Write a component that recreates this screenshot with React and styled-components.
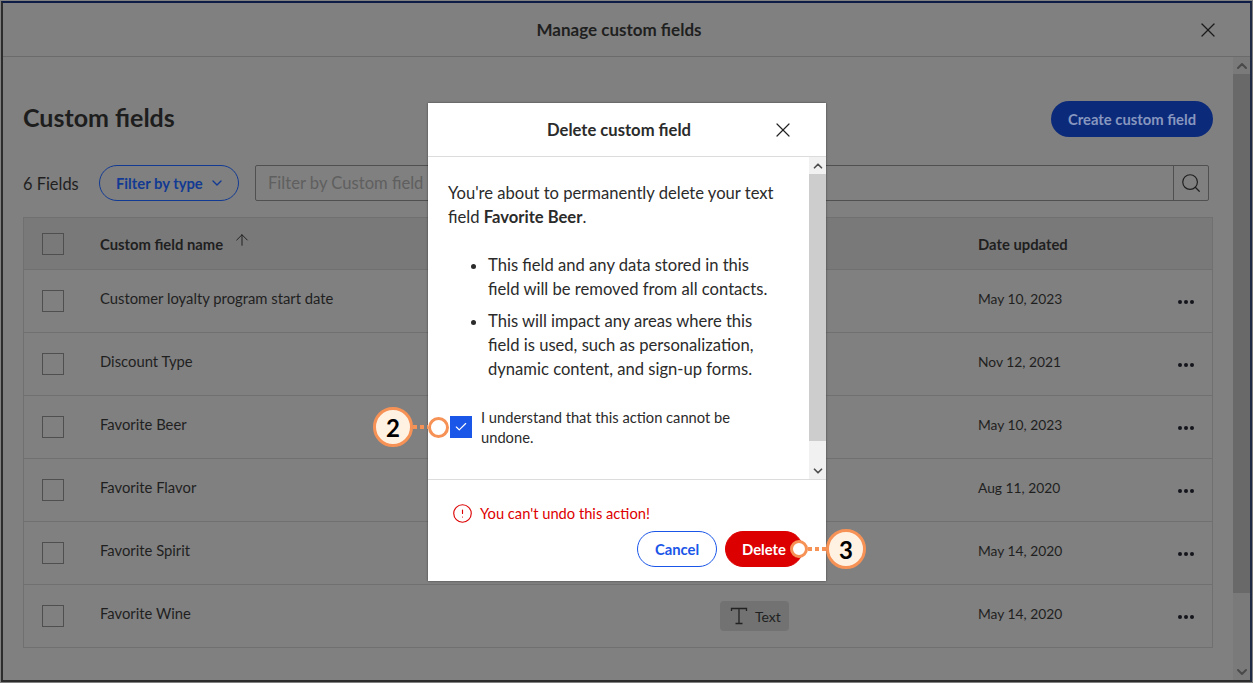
import React from 'react';
import styled, { createGlobalStyle } from 'styled-components';
import { ChevronDown, ChevronUp, Search, X, ArrowUp, Check, CircleAlert } from 'lucide-react';

const GlobalStyle = createGlobalStyle`
	html, body {
		margin: 0;
		padding: 0;
		height: 100%;
		background: #808080;
		overflow: hidden;
	}
	* {
		box-sizing: border-box;
		font-family: Lato, 'Liberation Sans', sans-serif;
	}
`;

const Frame = styled.div`
	position: relative;
	display: flex;
	flex-direction: column;
	width: 1253px;
	height: 683px;
	padding: 1px;
	background: #808080;
	overflow: hidden;
`;

const Window = styled.div`
	flex: 1;
	display: flex;
	flex-direction: column;
	min-height: 0;
	border: 2px solid #2c2c2c;
	border-top-color: #0c1c46;
	border-right-color: #1f2a44;
`;

const TopBar = styled.header`
	position: relative;
	display: flex;
	align-items: center;
	justify-content: center;
	height: 54px;
	flex: none;
	padding-right: 15px;
	border-bottom: 1px solid #6b6b6b;
	font-size: 17px;
	font-weight: 700;
	color: #1f1f1f;
`;

const CloseTop = styled.span`
	position: absolute;
	right: 30px;
	top: 15px;
	display: flex;
	color: #1a1a1a;
`;

const Content = styled.div`
	flex: 1;
	display: flex;
	min-height: 0;
`;

const Main = styled.main`
	flex: 1;
	padding: 44px 20px 0 20px;
`;

const Scrollbar = styled.div`
	flex: none;
	display: flex;
	flex-direction: column;
	justify-content: space-between;
	width: ${p => p.$width}px;
	background: ${p => p.$track};
`;

const ScrollButton = styled.span`
	flex: none;
	display: flex;
	align-items: center;
	justify-content: center;
	height: 17px;
	color: ${p => p.$color};
`;

const Thumb = styled.div`
	flex: none;
	height: ${p => p.$height}px;
	background: ${p => p.$color};
`;

const ScrollSpacer = styled.div`
	flex: 1;
`;

const PageHead = styled.div`
	display: flex;
	align-items: center;
	justify-content: space-between;
	height: 36px;
`;

const PageTitle = styled.h1`
	margin: 0 0 4px;
	font-size: 25px;
	font-weight: 700;
	color: #1d1d1d;
`;

const CreateButton = styled.span`
	display: flex;
	align-items: center;
	justify-content: center;
	width: 162px;
	height: 36px;
	padding-bottom: 1px;
	border-radius: 18px;
	background: #0c2a7a;
	color: #8797bf;
	font-size: 14.8px;
	font-weight: 700;
`;

const Toolbar = styled.div`
	display: flex;
	align-items: center;
	height: 36px;
	margin: 28px 4px 16px 0;
`;

const FieldCount = styled.span`
	width: 76px;
	font-size: 16.4px;
	color: #1f1f1f;
`;

const FilterButton = styled.span`
	display: flex;
	align-items: center;
	justify-content: space-between;
	width: 140px;
	height: 36px;
	padding: 0 13px 0 16px;
	border: 1px solid #123a93;
	border-radius: 18px;
	color: #123a93;
	font-size: 14.8px;
	font-weight: 700;
`;

const SearchBox = styled.div`
	flex: 1;
	display: flex;
	height: 36px;
	margin-left: 16px;
	border: 1px solid #505050;
	border-radius: 2px;
`;

const SearchText = styled.span`
	flex: 1;
	display: flex;
	align-items: center;
	padding-left: 12px;
	font-size: 16.6px;
	color: #5f5f5f;
`;

const SearchIcon = styled.span`
	display: flex;
	align-items: center;
	justify-content: center;
	width: 35px;
	border-left: 1px solid #505050;
	color: #1f1f1f;
`;

const Table = styled.div`
	border: 1px solid #707070;
	border-bottom: 0;
`;

const Row = styled.div`
	display: grid;
	grid-template-columns: 76px 620px 258px 1fr;
	align-items: center;
	height: ${p => (p.$head ? 52 : 63)}px;
	border-bottom: 1px solid #707070;
	background: ${p => (p.$head ? '#797979' : 'transparent')};
	font-size: 14.8px;
	color: #1f1f1f;
`;

const HeadCell = styled.span`
	display: flex;
	align-items: center;
	gap: 10px;
	font-weight: 700;

	svg {
		margin-top: -8px;
	}
`;

const Cell = styled.span`
	display: flex;
	align-items: center;
	justify-content: ${p => (p.$split ? 'space-between' : 'flex-start')};
	padding-right: ${p => (p.$split ? 18 : 0)}px;
	padding-bottom: ${p => (p.$raised ? 7 : 0)}px;
`;

const DateText = styled.span`
	font-size: 13.8px;
	padding-bottom: 5px;
`;

const Box = styled.span`
	display: block;
	width: 22px;
	height: 22px;
	margin-left: 18px;
	border: 1px solid #4f4f4f;
`;

const TypePill = styled.span`
	display: flex;
	align-items: center;
	gap: 6px;
	width: 69px;
	height: 30px;
	padding-left: 9px;
	border-radius: 4px;
	background: #727272;
	font-size: 14px;
`;

const Dots = styled.span`
	display: flex;
	gap: 2px;
	margin-bottom: -1px;
`;

const Dot = styled.i`
	display: block;
	width: 4px;
	height: 4px;
	border-radius: 50%;
	background: #14141c;
`;

const Modal = styled.section`
	position: absolute;
	left: 428px;
	top: 103px;
	display: flex;
	flex-direction: column;
	width: 398px;
	height: 478px;
	background: #fff;
	box-shadow: 0 0 2px rgba(0, 0, 0, 0.5);
`;

const ModalHead = styled.div`
	position: relative;
	display: flex;
	align-items: center;
	justify-content: center;
	flex: none;
	height: 54px;
	padding-right: 16px;
	border-bottom: 1px solid #dcdcdc;
	font-size: 16.6px;
	font-weight: 700;
	color: #2b2b2b;
`;

const ModalClose = styled.span`
	position: absolute;
	right: 31px;
	top: 15px;
	display: flex;
	color: #222;
`;

const ModalMiddle = styled.div`
	flex: 1;
	display: flex;
	min-height: 0;
	border-bottom: 1px solid #dcdcdc;
`;

const ModalBody = styled.div`
	flex: 1;
	padding: 24px 20px 0;
	font-size: 16.6px;
	line-height: 24px;
	color: #2b2b2b;
`;

const Intro = styled.p`
	margin: 0;
`;

const Bullets = styled.ul`
	margin: 24px 0 0;
	padding: 0 8px 0 40px;
`;

const Bullet = styled.li`
	margin-bottom: 8px;
`;

const Confirm = styled.div`
	display: flex;
	gap: 9px;
	width: 330px;
	margin: 26px 0 0 2px;
	font-size: 14.7px;
	line-height: 20px;
`;

const Checked = styled.span`
	flex: none;
	display: flex;
	align-items: center;
	justify-content: center;
	width: 22px;
	height: 22px;
	margin-top: 9px;
	background: #1a56e8;
	color: #fff;
`;

const ModalFoot = styled.div`
	flex: none;
	height: 101px;
	padding: 24px 23px 0 24px;
`;

const Warning = styled.div`
	display: flex;
	align-items: center;
	gap: 7px;
	height: 18px;
	font-size: 14.7px;
	color: #dd0000;
`;

const Actions = styled.div`
	display: flex;
	justify-content: flex-end;
	gap: 8px;
	margin-top: 9px;
`;

const Action = styled.span`
	display: flex;
	align-items: center;
	justify-content: center;
	width: ${p => p.$width}px;
	height: 36px;
	border-radius: 18px;
	border: 1px solid ${p => (p.$danger ? '#dd0000' : '#1a56e8')};
	background: ${p => (p.$danger ? '#dd0000' : '#fff')};
	color: ${p => (p.$danger ? '#fff' : '#1a56e8')};
	font-size: 14.8px;
	font-weight: 700;
`;

const Callout = styled.div`
	position: absolute;
	left: ${p => p.$left}px;
	top: ${p => p.$top}px;
	display: flex;
	flex-direction: ${p => (p.$flip ? 'row-reverse' : 'row')};
	align-items: center;
`;

const Badge = styled.span`
	display: flex;
	align-items: center;
	justify-content: center;
	width: 40px;
	height: 40px;
	border: 3px solid #f79256;
	border-radius: 50%;
	background: #fff2e3;
	color: #000;
	font-size: 24px;
	font-weight: 700;
`;

const Leader = styled.span`
	display: block;
	width: ${p => p.$width}px;
	height: 4px;
	background: repeating-linear-gradient(${p => (p.$flip ? '270deg' : '90deg')}, #f79256 0 4px, transparent 4px 7px);
`;

const Ring = styled.span`
	display: block;
	width: ${p => p.$size}px;
	height: ${p => p.$size}px;
	border: 3px solid #f79256;
	border-radius: 50%;
	background: #fff;
`;

const TextGlyph = () => (
	<svg width="20" height="20" viewBox="0 0 20 20" fill="none" stroke="#222" strokeWidth="1.3">
		<path d="M2.5 5V2.5h15V5M10 2.5v15M6.5 17.5h7" />
	</svg>
);

const rows = [
	{ name: 'Customer loyalty program start date', date: 'May 10, 2023' },
	{ name: 'Discount Type', date: 'Nov 12, 2021' },
	{ name: 'Favorite Beer', date: 'May 10, 2023' },
	{ name: 'Favorite Flavor', date: 'Aug 11, 2020' },
	{ name: 'Favorite Spirit', date: 'May 14, 2020' },
	{ name: 'Favorite Wine', date: 'May 14, 2020' },
];

const App = () => {
	return (
		<Frame>
			<GlobalStyle />
			<Window>
				<TopBar>
					Manage custom fields
					<CloseTop><X size={24} strokeWidth={1.3} /></CloseTop>
				</TopBar>
				<Content>
					<Main>
						<PageHead>
							<PageTitle>Custom fields</PageTitle>
							<CreateButton>Create custom field</CreateButton>
						</PageHead>
						<Toolbar>
							<FieldCount>6 Fields</FieldCount>
							<FilterButton>
								Filter by type
								<ChevronDown size={16} />
							</FilterButton>
							<SearchBox>
								<SearchText>Filter by Custom field</SearchText>
								<SearchIcon><Search size={22} strokeWidth={1.3} /></SearchIcon>
							</SearchBox>
						</Toolbar>
						<Table>
							<Row $head>
								<Box />
								<HeadCell>Custom field name <ArrowUp size={18} strokeWidth={1.3} /></HeadCell>
								<span />
								<HeadCell>Date updated</HeadCell>
							</Row>
							{rows.map(row => (
								<Row key={row.name}>
									<Box />
									<Cell $raised>{row.name}</Cell>
									<Cell><TypePill><TextGlyph />Text</TypePill></Cell>
									<Cell $split>
										<DateText>{row.date}</DateText>
										<Dots><Dot /><Dot /><Dot /></Dots>
									</Cell>
								</Row>
							))}
						</Table>
					</Main>
					<Scrollbar $width={17} $track="#7a7a7a">
						<ScrollButton $color="#4a4a4a"><ChevronUp size={16} strokeWidth={3} /></ScrollButton>
						<Thumb $height={519} $color="#696969" />
						<ScrollSpacer />
						<ScrollButton $color="#4a4a4a"><ChevronDown size={16} strokeWidth={3} /></ScrollButton>
					</Scrollbar>
				</Content>
			</Window>

			<Modal>
				<ModalHead>
					Delete custom field
					<ModalClose><X size={24} strokeWidth={1.2} /></ModalClose>
				</ModalHead>
				<ModalMiddle>
					<ModalBody>
						<Intro>You're about to permanently delete your text field <b>Favorite Beer</b>.</Intro>
						<Bullets>
							<Bullet>This field and any data stored in this field will be removed from all contacts.</Bullet>
							<Bullet>This will impact any areas where this field is used, such as personalization, dynamic content, and sign-up forms.</Bullet>
						</Bullets>
						<Confirm>
							<Checked><Check size={14} strokeWidth={2} /></Checked>
							<span>I understand that this action cannot be undone.</span>
						</Confirm>
					</ModalBody>
					<Scrollbar $width={17} $track="#f1f1f1">
						<ScrollButton $color="#505050"><ChevronUp size={14} strokeWidth={3} /></ScrollButton>
						<Thumb $height={267} $color="#cdcdcd" />
						<ScrollSpacer />
						<ScrollButton $color="#505050"><ChevronDown size={14} strokeWidth={3} /></ScrollButton>
					</Scrollbar>
				</ModalMiddle>
				<ModalFoot>
					<Warning>
						<CircleAlert size={21} strokeWidth={1.3} />
						You can't undo this action!
					</Warning>
					<Actions>
						<Action $width={80}>Cancel</Action>
						<Action $width={78} $danger>Delete</Action>
					</Actions>
				</ModalFoot>
			</Modal>

			<Callout $left={373} $top={407}>
				<Badge>2</Badge>
				<Leader $width={15} />
				<Ring $size={21} />
			</Callout>
			<Callout $left={790} $top={529} $flip>
				<Badge>3</Badge>
				<Leader $width={18} $flip />
				<Ring $size={18} />
			</Callout>
		</Frame>
	);
};

export default App;
